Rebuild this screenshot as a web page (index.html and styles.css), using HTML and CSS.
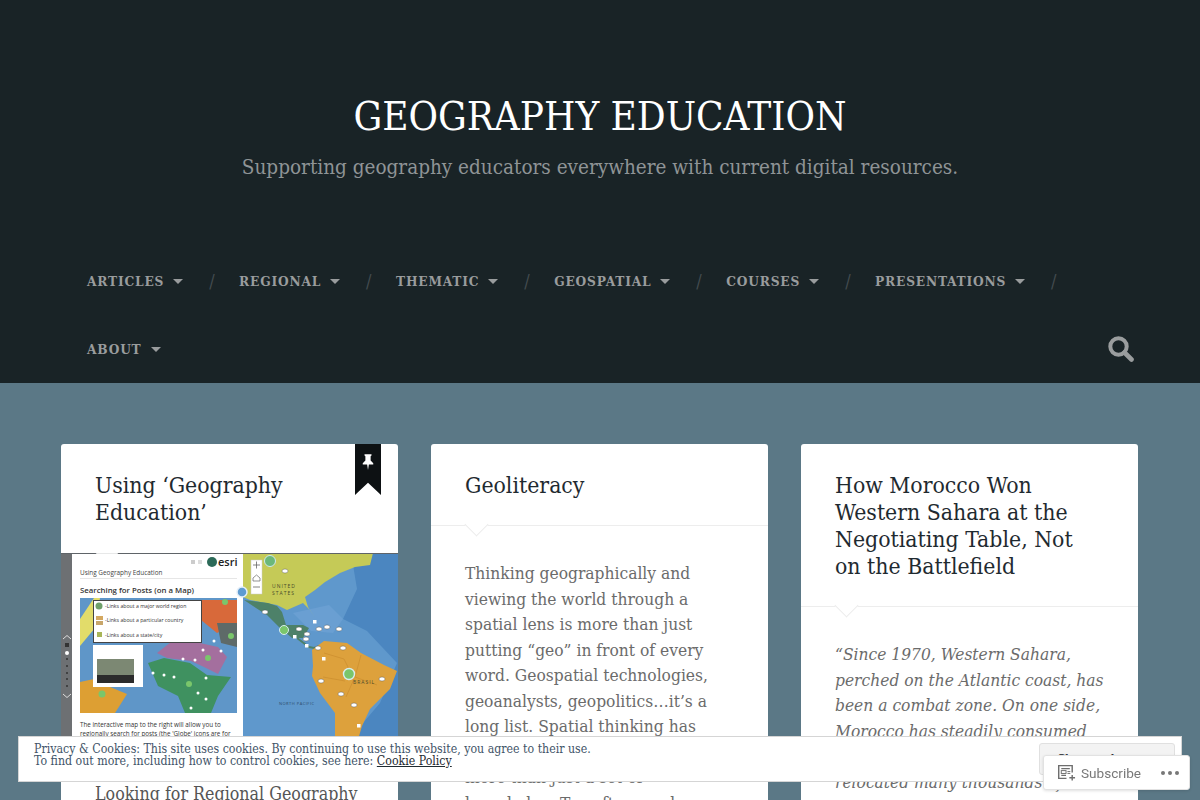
FILE: index.html
```html
<!DOCTYPE html>
<html lang="en">
<head>
    <meta charset="UTF-8">
    <title>Geography Education</title>
    <link rel="stylesheet" href="styles.css">
</head>
<body>
    <header class="site-header">
        <div class="branding">
            <h1 class="site-title">GEOGRAPHY EDUCATION</h1>
            <p class="site-tagline">Supporting geography educators everywhere with current digital resources.</p>
        </div>
        <nav class="site-nav">
            <ul class="nav-list">
                <li class="nav-item">Articles<span class="caret"></span></li>
                <li class="nav-item">Regional<span class="caret"></span></li>
                <li class="nav-item">Thematic<span class="caret"></span></li>
                <li class="nav-item">Geospatial<span class="caret"></span></li>
                <li class="nav-item">Courses<span class="caret"></span></li>
                <li class="nav-item">Presentations<span class="caret"></span></li>
                <li class="nav-item nav-last">About<span class="caret"></span></li>
            </ul>
            <svg class="search-icon" viewBox="0 0 26 26">
                <circle cx="10.5" cy="10.5" r="8.2" fill="none" stroke="#9a9d9e" stroke-width="4"/>
                <path d="M16.5 16.5L23.5 23.5" stroke="#9a9d9e" stroke-width="4.6" stroke-linecap="round"/>
            </svg>
        </nav>
    </header>

    <main class="posts">
        <div class="post-column">
            <article class="post">
                <div class="sticky-flag">
                    <svg class="pin" viewBox="0 0 16 20">
                        <path d="M4 1h8v1.5l-1 .8v5l3 3v1.6H9L8 19l-1-6.1H2v-1.6l3-3v-5l-1-.8z" fill="#fff"/>
                    </svg>
                </div>
                <h2 class="post-title">Using ‘Geography<br>Education’</h2>
                <div class="post-image">
                    <svg class="map-svg" viewBox="0 0 337 190">
                        <rect width="337" height="190" fill="#fff"/>

                        <!-- side rail -->
                        <rect width="11" height="190" fill="#6d7073"/>
                        <path d="M2 86l4-3.5 4 3.5M2 141l4 3.5 4-3.5" fill="none" stroke="#ddd" stroke-width="1"/>
                        <rect x="4" y="90" width="4" height="4" fill="#333"/>
                        <circle cx="6" cy="100" r="2" fill="#fff"/>
                        <circle cx="6" cy="106" r="1" fill="#333"/>
                        <circle cx="6" cy="113" r="1" fill="#333"/>
                        <circle cx="6" cy="120" r="1" fill="#333"/>
                        <circle cx="6" cy="126" r="1" fill="#333"/>
                        <circle cx="6" cy="133" r="1" fill="#333"/>

                        <!-- left panel -->
                        <text class="map-text-title" x="19" y="22">Using Geography Education</text>
                        <rect x="19" y="25" width="157" height="1" fill="#e6e6e6"/>
                        <text class="map-text-head" x="19" y="40">Searching for Posts (on a Map)</text>
                        <rect x="130" y="7" width="4" height="4" fill="#ccc"/>
                        <rect x="137" y="7" width="4" height="4" fill="#ddd"/>
                        <circle cx="151" cy="9" r="5" fill="#2c6a58"/>
                        <text class="map-text-esri" x="157" y="13">esri</text>

                        <!-- world map -->
                        <rect x="19" y="45" width="157" height="115" fill="#5f96c8"/>
                        <path d="M19 66l14-21h6l-5 30-15 18z" fill="#e2dc6a"/>
                        <path d="M129 47h47v23l-20 10-16-13z" fill="#d8693a"/>
                        <path d="M156 70h20v24l-16-4z" fill="#5e6a68"/>
                        <path d="M96 100l14-11 29 1 18 4 9 10-9 17-14-7-13-6-24-3z" fill="#a46f9e"/>
                        <path d="M87 110l16-5 26 5 17 12 24 2-13 19-7 17h-26l-7-17-20-10z" fill="#3f9160"/>
                        <path d="M19 129l14-3 16 8 17 7-12 19H19z" fill="#dd9f33"/>

                        <!-- legend and popup -->
                        <rect x="32.5" y="47.5" width="108" height="42" fill="#fff" stroke="#444"/>
                        <circle cx="38" cy="53" r="3.5" fill="#6fa06a"/>
                        <rect x="35" y="63" width="7" height="4" fill="#d4a860"/>
                        <rect x="35" y="68" width="7" height="4" fill="#c8a66a"/>
                        <rect x="36" y="79" width="5" height="5" fill="#a8b557"/>
                        <text class="map-text-tiny" x="44" y="55">-Links about a major world region</text>
                        <text class="map-text-tiny" x="44" y="69">-Links about a particular country</text>
                        <text class="map-text-tiny" x="44" y="84">-Links about a state/city</text>
                        <rect x="32" y="92" width="50" height="42" fill="#fff"/>
                        <rect x="36" y="106" width="37" height="16" fill="#7c8873"/>
                        <rect x="36" y="122" width="37" height="8" fill="#2b2b2b"/>

                        <circle cx="164" cy="49" r="3" fill="#7ac66b"/>
                        <circle cx="170" cy="83" r="3" fill="#7ac66b"/>
                        <circle cx="147" cy="105" r="3" fill="#7ac66b"/>
                        <circle cx="128" cy="131" r="3" fill="#7ac66b"/>
                        <circle cx="41" cy="141" r="3.5" fill="#7ac66b"/>
                        <g fill="#fff">
                            <circle cx="153" cy="88" r="1.5"/>
                            <circle cx="142" cy="97" r="1.5"/>
                            <circle cx="160" cy="98" r="1.5"/>
                            <circle cx="122" cy="106" r="1.5"/>
                            <circle cx="134" cy="107" r="1.5"/>
                            <circle cx="103" cy="122" r="1.5"/>
                            <circle cx="113" cy="124" r="1.5"/>
                            <circle cx="145" cy="125" r="1.5"/>
                            <circle cx="137" cy="140" r="1.5"/>
                            <circle cx="145" cy="146" r="1.5"/>
                            <circle cx="130" cy="155" r="1.5"/>
                            <circle cx="92" cy="120" r="1.5"/>
                        </g>
                        <text class="map-text-body" x="19" y="174">The interactive map to the right will allow you to</text>
                        <text class="map-text-body" x="19" y="183">regionally search for posts (the 'Globe' icons are for</text>

                        <!-- right panel map -->
                        <rect x="182" width="155" height="190" fill="#5f98cc"/>
                        <path d="M290 0h47v190h-52l34-40 17-40-30-32-24-12 14-30z" fill="#4b86c0"/>
                        <path d="M232 60l36-8 14 14-10 14-22-2z" fill="#6a9fd2"/>
                        <path d="M182 0h130l-3 12-15 2-15 6-15 9-10 8-10 7 3 10 7 11-5-8-7-7-16 7-10-5-27-5-7-3z" fill="#c5ca57"/>
                        <path d="M183 47l24 3 9 3 5 6 4 13 17 0 6 3-6 10-11 0-13-11-12-12-14-9z" fill="#4d8169"/>
                        <path d="M236 85l12 9 5 1 6-2" fill="none" stroke="#4d8169" stroke-width="2"/>
                        <path d="M251 97l12-9 23 2 14 10 23 12 13 6-7 18-20 20-8 17-5 17h-22l0-30-15-20-8-17 1-10z" fill="#dda13c"/>
                        <path d="M263 100l20 6 10 20-8 18M300 102l-6 22 22 8M262 124l22 4" fill="none" stroke="#c88a2c" stroke-width=".6"/>

                        <!-- zoom control -->
                        <rect x="190" y="7" width="11" height="34" fill="#fff" stroke="#ccc" stroke-width=".5"/>
                        <path d="M192 12h7M195.5 8.5v7M192 34h7" stroke="#666" stroke-width=".8"/>
                        <path d="M192 25l3.5-3 3.5 3v3h-7z" fill="none" stroke="#666" stroke-width=".7"/>

                        <!-- markers -->
                        <circle cx="209" cy="8" r="5.5" fill="#6cb87a" stroke="#cfe9ee"/>
                        <circle cx="223" cy="77" r="4.5" fill="#7ac66b" stroke="#d8eef0"/>
                        <circle cx="288" cy="121" r="5.5" fill="#7ac66b" stroke="#d8eef0" stroke-width="1.4"/>
                        <circle cx="181" cy="39" r="5" fill="#5e9bd1" stroke="#e4eef8" stroke-width="1.5"/>
                        <g fill="#fff" stroke="#444" stroke-width=".4">
                            <ellipse cx="224" cy="18" rx="3" ry="2"/>
                            <ellipse cx="204" cy="59" rx="3" ry="2"/>
                            <ellipse cx="238" cy="76" rx="3" ry="2"/>
                            <ellipse cx="258" cy="76" rx="3" ry="2"/>
                            <ellipse cx="266" cy="74" rx="3" ry="2"/>
                            <ellipse cx="278" cy="76" rx="3" ry="2"/>
                            <ellipse cx="246" cy="81" rx="3" ry="2"/>
                            <ellipse cx="245" cy="86" rx="3" ry="2"/>
                            <ellipse cx="257" cy="95" rx="3" ry="2"/>
                            <ellipse cx="282" cy="95" rx="3" ry="2"/>
                            <ellipse cx="260" cy="128" rx="3" ry="2"/>
                            <ellipse cx="321" cy="126" rx="3" ry="2"/>
                            <ellipse cx="280" cy="141" rx="3" ry="2"/>
                            <ellipse cx="293" cy="152" rx="3" ry="2"/>
                        </g>
                        <g fill="#fff">
                            <rect x="252" y="67" width="3.5" height="3.5"/>
                            <rect x="232" y="82" width="3.5" height="3.5"/>
                            <rect x="244" y="91" width="3.5" height="3.5"/>
                            <rect x="261" y="104" width="3.5" height="3.5"/>
                            <rect x="296" y="171" width="3.5" height="3.5"/>
                        </g>
                        <text class="map-text-label" x="211" y="35">UNITED</text>
                        <text class="map-text-label" x="211" y="42">STATES</text>
                        <text class="map-text-label" x="292" y="131">BRASIL</text>
                        <text class="map-text-sea" x="218" y="152">NORTH PACIFIC</text>

                        <rect width="337" height="1" fill="#5f6468"/>
                    </svg>
                </div>
                <h3 class="post-subhead">Looking for Regional Geography</h3>
            </article>
        </div>

        <div class="post-column">
            <article class="post">
                <h2 class="post-title post-title-ruled">Geoliteracy</h2>
                <div class="post-body">
                    <p>Thinking geographically and<br>viewing the world through a<br>spatial lens is more than just<br>putting “geo” in front of every<br>word. Geospatial technologies,<br>geoanalysts, geopolitics…it’s a<br>long list. Spatial thinking has<br>become a core literacy that is<br>more than just a set of<br>knowledge. Too often used</p>
                </div>
            </article>
        </div>

        <div class="post-column">
            <article class="post">
                <h2 class="post-title post-title-ruled">How Morocco Won<br>Western Sahara at the<br>Negotiating Table, Not<br>on the Battlefield</h2>
                <div class="post-body post-quote">
                    <p>“Since 1970, Western Sahara,<br>perched on the Atlantic coast, has<br>been a combat zone. On one side,<br>Morocco has steadily consumed<br>territory and has built a wall and<br>relocated many thousands of</p>
                </div>
            </article>
        </div>
    </main>

    <div class="cookie-bar">
        <div class="cookie-text">Privacy &amp; Cookies: This site uses cookies. By continuing to use this website, you agree to their use.<br>To find out more, including how to control cookies, see here: <a href="#" class="cookie-link">Cookie Policy</a></div>
        <button class="cookie-close">Close and accept</button>
    </div>

    <div class="subscribe-bar">
        <svg class="subscribe-icon" viewBox="0 0 20 20">
            <path d="M16 10V2.8H1.8v13.4H10" fill="none" stroke="#6e6e6e" stroke-width="1.5"/>
            <path d="M4.5 6h9M4.5 13h5" stroke="#6e6e6e" stroke-width="1.3"/>
            <rect x="4.5" y="8" width="5" height="3" fill="none" stroke="#6e6e6e"/>
            <path d="M11 9h3M11 11h3" stroke="#6e6e6e"/>
            <path d="M16 12.5v6M13 15.5h6" stroke="#6e6e6e" stroke-width="1.5"/>
        </svg>
        <span class="subscribe-label">Subscribe</span>
        <span class="subscribe-dots"><i></i><i></i><i></i></span>
    </div>
</body>
</html>
```

FILE: styles.css
```css
* {
    margin: 0;
    padding: 0;
    box-sizing: border-box;
}

body {
    font-family: 'DejaVu Serif Condensed', 'DejaVu Serif', serif;
    font-stretch: condensed;
    background-color: #5b7886;
    color: #1f2a30;
    overflow: hidden;
    height: 800px;
}

.site-header {
    background-color: #192326;
    height: 383px;
}

.branding {
    text-align: center;
    padding-top: 89px;
    height: 247px;
}

.site-title {
    font-size: 40px;
    font-weight: 400;
    line-height: 54px;
    color: #fff;
}

.site-tagline {
    font-size: 20.5px;
    line-height: 28px;
    margin-top: 10px;
    color: #8f9496;
}

.site-nav {
    display: flex;
    align-items: flex-end;
    padding: 0 66px 0 87px;
}

.nav-list {
    list-style: none;
    display: flex;
    flex-wrap: wrap;
    flex: 1;
}

.nav-item {
    display: flex;
    align-items: center;
    height: 68px;
    font-size: 13.6px;
    font-weight: 700;
    letter-spacing: 0.8px;
    text-transform: uppercase;
    color: #999c9d;
    margin-right: 23.7px;
}

.nav-item::after {
    content: '/';
    font-weight: 400;
    font-size: 18px;
    color: #434b4f;
    margin-left: 26px;
}

.nav-last::after {
    content: none;
}

.nav-last {
    flex-basis: 100%;
}

.caret {
    width: 0;
    height: 0;
    border-left: 5px solid transparent;
    border-right: 5px solid transparent;
    border-top: 5px solid #999c9d;
    margin-left: 9px;
}

.search-icon {
    width: 26px;
    height: 26px;
    margin-bottom: 21px;
}

.posts {
    display: flex;
    gap: 33px;
    padding: 61px 62px 0 61px;
}

.post-column {
    width: 337px;
    flex-shrink: 0;
}

.post {
    position: relative;
    background-color: #fff;
    border-radius: 3px;
    height: 500px;
    overflow: hidden;
}

.sticky-flag {
    position: absolute;
    top: 0;
    right: 17px;
    width: 26px;
    height: 51px;
    padding-top: 9px;
    display: flex;
    justify-content: center;
    align-items: flex-start;
    background-color: #0d1113;
    clip-path: polygon(0 0, 100% 0, 100% 100%, 50% 76%, 0 100%);
}

.pin {
    width: 14px;
    height: 18px;
}

.post-title {
    font-size: 22.8px;
    font-weight: 400;
    line-height: 27px;
    padding: 28px 34px 27px;
    color: #1f2a30;
}

.post-title-ruled {
    position: relative;
    padding-bottom: 26px;
    border-bottom: 1px solid #ededed;
}

.post-title-ruled::after {
    content: '';
    position: absolute;
    left: 37px;
    bottom: -8px;
    width: 16px;
    height: 16px;
    background-color: #fff;
    border-right: 1px solid #ededed;
    border-bottom: 1px solid #ededed;
    transform: rotate(45deg);
}

.post-image {
    position: relative;
    height: 190px;
}

.post-image::before {
    content: '';
    position: absolute;
    left: 38px;
    top: -8px;
    width: 16px;
    height: 16px;
    background-color: rgba(255, 255, 255, 0.85);
    transform: rotate(45deg);
}

.map-svg {
    display: block;
    width: 337px;
    height: 190px;
    font-family: 'Open Sans', sans-serif;
    font-stretch: normal;
}

.map-text-title {
    font-size: 6.4px;
    fill: #444;
}

.map-text-head {
    font-size: 7.8px;
    font-weight: 600;
    fill: #333;
}

.map-text-tiny {
    font-size: 5.2px;
    fill: #333;
}

.map-text-body {
    font-size: 6.3px;
    fill: #333;
}

.map-text-esri {
    font-size: 11px;
    font-weight: 600;
    fill: #222;
}

.map-text-label {
    font-size: 5px;
    letter-spacing: 1px;
    fill: #4b4b2b;
}

.map-text-sea {
    font-size: 4px;
    letter-spacing: 0.5px;
    fill: #2c4a68;
}

.post-subhead {
    font-size: 17.7px;
    font-weight: 400;
    line-height: 27px;
    padding: 38px 34px 0;
    white-space: nowrap;
    color: #555;
}

.post-body {
    padding: 35px 34px 0;
    font-size: 17.25px;
    line-height: 25.5px;
    color: #6b6b6b;
    white-space: nowrap;
}

.post-quote {
    font-style: italic;
}

.cookie-bar {
    position: fixed;
    left: 18px;
    top: 736px;
    width: 1164px;
    height: 46px;
    display: flex;
    justify-content: space-between;
    align-items: flex-start;
    padding: 6px 6px 0 15px;
    background-color: #fff;
    border: 1px solid #d5d5d5;
}

.cookie-text {
    font-size: 12.25px;
    line-height: 12px;
    color: #3f5468;
}

.cookie-link {
    color: #1f2a30;
}

.cookie-close {
    font-family: inherit;
    font-size: 13px;
    height: 32px;
    width: 136px;
    color: #1f2a30;
    background-color: #f3f3f3;
    border: 1px solid #e0e0e0;
    border-radius: 3px;
}

.subscribe-bar {
    position: fixed;
    left: 1043px;
    top: 755px;
    width: 147px;
    height: 35px;
    display: flex;
    align-items: center;
    padding: 0 10px 0 13px;
    background-color: #fff;
    border: 1px solid #e2e2e2;
    border-radius: 3px;
    box-shadow: 0 1px 3px rgba(0, 0, 0, 0.12);
    font-family: 'Roboto', sans-serif;
    font-stretch: normal;
}

.subscribe-icon {
    width: 19px;
    height: 19px;
}

.subscribe-label {
    font-size: 13.6px;
    color: #787878;
    margin-left: 5px;
    flex: 1;
}

.subscribe-dots {
    display: flex;
    gap: 3px;
}

.subscribe-dots i {
    width: 4px;
    height: 4px;
    border-radius: 50%;
    background-color: #777;
}
```
